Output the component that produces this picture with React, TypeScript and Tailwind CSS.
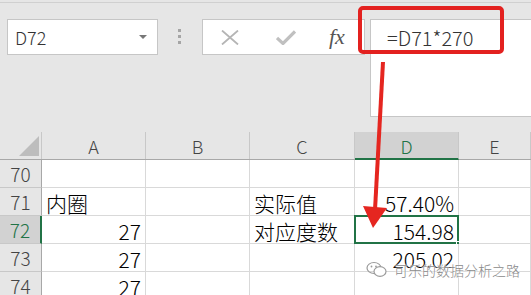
import { Fragment } from "react";

const cols = [
  { key: "A", w: "w-[104px]" },
  { key: "B", w: "w-[104px]" },
  { key: "C", w: "w-[105px]" },
  { key: "D", w: "w-[104px]" },
  { key: "E", w: "flex-1" },
];

type Cell = { text?: string; align?: "left" | "right" };

const rows: { n: number; cells: Record<string, Cell> }[] = [
  { n: 70, cells: {} },
  { n: 71, cells: { A: { text: "内圈" }, C: { text: "实际值" }, D: { text: "57.40%", align: "right" } } },
  { n: 72, cells: { A: { text: "27", align: "right" }, C: { text: "对应度数" }, D: { text: "154.98", align: "right" } } },
  { n: 73, cells: { A: { text: "27", align: "right" }, D: { text: "205.02", align: "right" } } },
  { n: 74, cells: { A: { text: "27", align: "right" } } },
];

const font = "font-['Noto_Sans_CJK_SC',sans-serif] font-light";

export default function App() {
  return (
    <div className={`relative h-[295px] w-[531px] overflow-hidden bg-[#e6e6e6] ${font}`}>
      <div className="mt-[2px] border-t border-[#d0d0d0]" />

      {/* formula bar strip */}
      <div className="mt-[16px] flex items-start">
        <div className="ml-[7px] flex h-[36px] w-[151px] items-center justify-between border border-[#c6c6c6] bg-white pl-[7px] pr-[10px]">
          <span className="text-[18px] leading-none text-[#333]">D72</span>
          <span className="h-0 w-0 border-x-[4px] border-t-[4px] border-x-transparent border-t-[#777]" />
        </div>
        <div className="ml-[20px] mt-[10px] flex flex-col gap-[3px]">
          <span className="h-[3px] w-[3px] bg-[#a5a5a5]" />
          <span className="h-[3px] w-[3px] bg-[#a5a5a5]" />
          <span className="h-[3px] w-[3px] bg-[#a5a5a5]" />
        </div>
        <div className="ml-[21px] flex h-[36px] w-[163px] items-center border border-[#c6c6c6] bg-white">
          <svg className="ml-[18px]" width="18" height="15" viewBox="0 0 18 15">
            <path d="M1 0.5 L17 14.5 M17 0.5 L1 14.5" stroke="#b5b5b5" strokeWidth="1.8" fill="none" />
          </svg>
          <svg className="ml-[37px]" width="20" height="15" viewBox="0 0 20 15">
            <path d="M1 8 L7 13.5 L19 1.5" stroke="#c0c0c0" strokeWidth="3.2" fill="none" />
          </svg>
          <span className="ml-[33px] font-['Liberation_Serif',serif] text-[22px] font-normal italic leading-none text-[#555]">fx</span>
        </div>
        <div className="ml-[5px] h-[98px] flex-1 border-y border-l border-[#c6c6c6] bg-white pl-[16px] pt-[7px]">
          <span className="text-[20px] leading-none text-[#333]">=D71*270</span>
        </div>
      </div>

      {/* grid */}
      <div className="mt-[15px]">
        <div className="flex h-[28px] border-b border-[#a8a8a8]">
          <div className="relative w-[42px] border-r border-[#c8c8c8]">
            <svg className="absolute bottom-[3px] right-[2px]" width="20" height="20" viewBox="0 0 20 20">
              <polygon points="20,0 20,20 0,20" fill="#bdbdbd" />
            </svg>
          </div>
          {cols.map((c) =>
            c.key === "D" ? (
              <div
                key={c.key}
                className={`${c.w} -mb-px flex items-center justify-center border-b-2 border-r border-b-[#217346] border-r-[#c8c8c8] bg-[#d2d2d2] pt-[2px] text-[18px] text-[#217346]`}
              >
                {c.key}
              </div>
            ) : (
              <div
                key={c.key}
                className={`${c.w} flex items-center justify-center border-r border-[#c8c8c8] pt-[2px] text-[18px] text-[#444]`}
              >
                {c.key}
              </div>
            )
          )}
        </div>

        {rows.map((r) => {
          const sel = r.n === 72;
          return (
            <div key={r.n} className="flex h-[28px]">
              <div
                className={
                  sel
                    ? "flex w-[42px] items-center justify-center border-b border-r-2 border-b-[#c8c8c8] border-r-[#217346] bg-[#d2d2d2] pt-[2px] text-[19px] text-[#217346]"
                    : "flex w-[42px] items-center justify-center border-b border-r border-b-[#c8c8c8] border-r-[#a8a8a8] pt-[2px] text-[19px] text-[#444]"
                }
              >
                {r.n}
              </div>
              {cols.map((c) => {
                const cell = r.cells[c.key];
                const active = sel && c.key === "D";
                return (
                  <Fragment key={c.key}>
                    <div
                      className={`${c.w} relative flex items-center border-b border-r border-[#d9d9d9] bg-white pt-[3px] text-[21px] leading-none text-black ${
                        cell?.align === "right" ? "justify-end pr-[4px]" : "justify-start pl-[4px]"
                      }`}
                    >
                      {cell?.text}
                      {active && (
                        <>
                          <span className="pointer-events-none absolute -left-px -top-px bottom-[-1px] right-[-1px] border-2 border-[#217346]" />
                          <span className="absolute bottom-[-4px] right-[-4px] h-[6px] w-[6px] border border-white bg-[#217346]" />
                        </>
                      )}
                    </div>
                  </Fragment>
                );
              })}
            </div>
          );
        })}
      </div>

      {/* annotation: red box + arrow */}
      <div className="pointer-events-none absolute left-[358px] top-[6px] h-[48px] w-[146px] rounded-[5px] border-[4px] border-[#e3211f]" />
      <svg className="pointer-events-none absolute left-0 top-0" width="531" height="295" viewBox="0 0 531 295">
        <line x1="383" y1="62" x2="375" y2="210" stroke="#e52620" strokeWidth="4" />
        <polygon points="363,206 387,208 373,228" fill="#e52620" />
      </svg>

      {/* watermark */}
      <div className="pointer-events-none absolute left-[366px] top-[261px] flex items-center gap-[6px]">
        <svg width="22" height="17" viewBox="0 0 22 17">
          <ellipse cx="8" cy="7" rx="7" ry="5.5" fill="none" stroke="#9a9a9a" strokeWidth="1.2" />
          <ellipse cx="14" cy="10.5" rx="6" ry="4.8" fill="white" stroke="#9a9a9a" strokeWidth="1.2" />
          <circle cx="5.5" cy="5.5" r="0.9" fill="#9a9a9a" />
          <circle cx="10" cy="5.5" r="0.9" fill="#9a9a9a" />
        </svg>
        <span className="text-[14px] leading-none text-[#8a8a8a] [text-shadow:0_0_2px_#fff,0_0_2px_#fff]">
          可乐的数据分析之路
        </span>
      </div>
    </div>
  );
}
